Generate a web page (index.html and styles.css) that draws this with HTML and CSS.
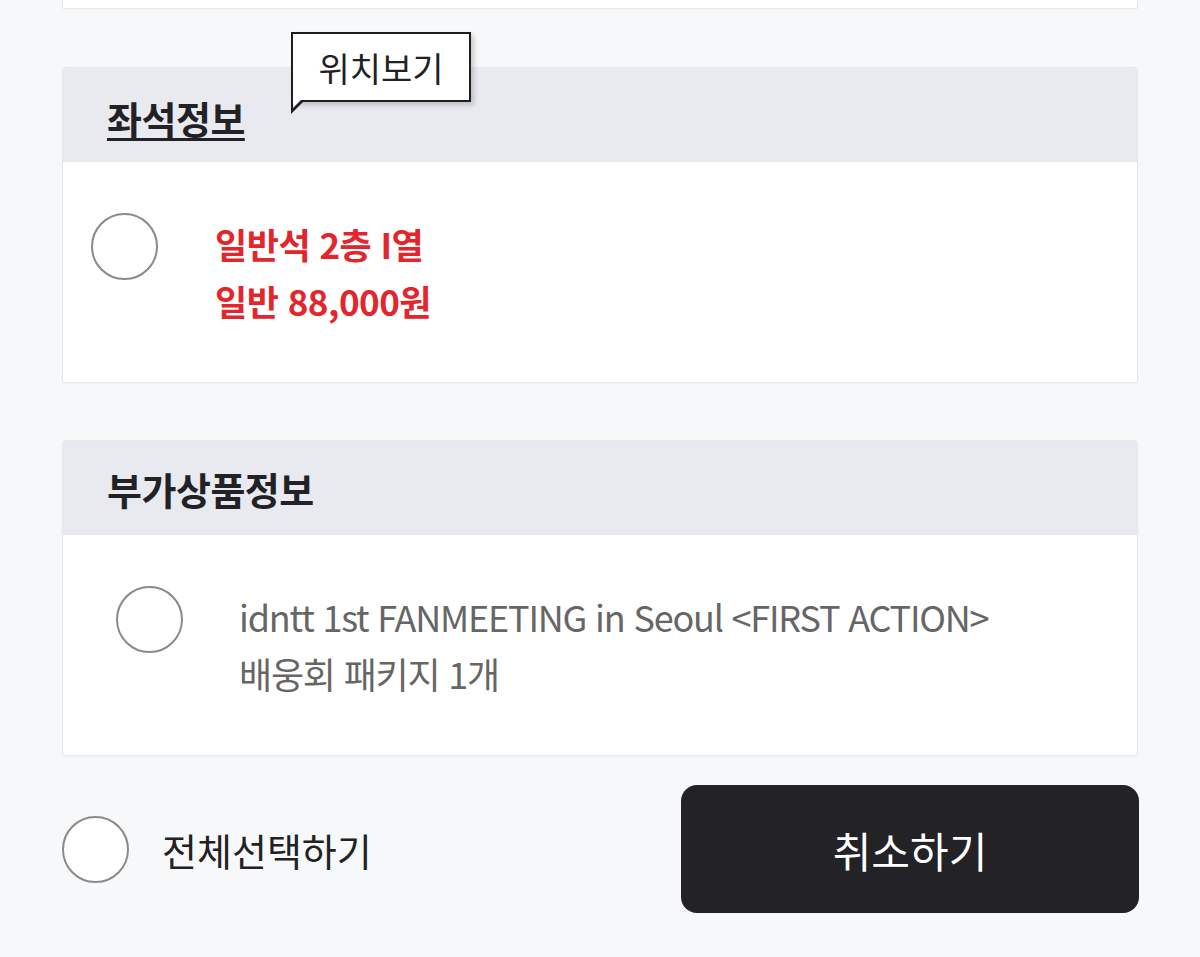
FILE: index.html
```html
<!DOCTYPE html>
<html lang="ko">
<head>
  <meta charset="UTF-8" />
  <meta name="viewport" content="width=device-width, initial-scale=1" />
  <title>좌석 취소</title>
  <link rel="stylesheet" href="styles.css">
</head>
<body>

<div class="page">
  <div class="card card-top"></div>

  <div class="card seat-card">
    <div class="card-head">
      <h3 class="title underline">좌석정보</h3>
      <div class="tooltip">위치보기</div>
    </div>
    <div class="card-body">
      <span class="radio"></span>
      <div class="info red">
        <p>일반석 2층 I열</p>
        <p>일반 88,000원</p>
      </div>
    </div>
  </div>

  <div class="card goods-card">
    <div class="card-head">
      <h3 class="title">부가상품정보</h3>
    </div>
    <div class="card-body">
      <span class="radio"></span>
      <div class="info gray">
        <p>idntt 1st FANMEETING in Seoul &lt;FIRST ACTION&gt;</p>
        <p>배웅회 패키지 1개</p>
      </div>
    </div>
  </div>

  <div class="footer">
    <label class="select-all">
      <span class="radio"></span>
      <span>전체선택하기</span>
    </label>
    <button class="cancel-btn">취소하기</button>
  </div>
</div>

</body>
</html>
```

FILE: styles.css
```css
* {
  box-sizing: border-box;
}
body {
  margin: 0;
  background: #f7f8fa;
  font-family: "Noto Sans CJK KR", "Noto Sans", sans-serif;
  color: #222;
}
p, h3 {
  margin: 0;
}
.page {
  padding: 0 62px;
}
.card {
  background: #fff;
  border: 1px solid #e6e7eb;
  border-radius: 3px;
  box-shadow: 0 1px 2px rgba(0, 0, 0, 0.03);
}
.card-top {
  height: 11px;
  margin-top: -2px;
  border-top: none;
  border-radius: 0 0 3px 3px;
}
.seat-card {
  margin-top: 58px;
}
.goods-card {
  margin-top: 57px;
}
.card-head {
  position: relative;
  height: 94px;
  background: #e9eaef;
  display: flex;
  align-items: center;
  padding-left: 44px;
  border-radius: 3px 3px 0 0;
}
.title {
  font-size: 38px;
  font-weight: 700;
  color: #222226;
  letter-spacing: -0.5px;
}
.title.underline {
  margin-top: 4px;
  text-decoration: underline;
  text-decoration-thickness: 3px;
  text-underline-offset: 4px;
}
.tooltip {
  position: absolute;
  left: 228px;
  top: -36px;
  height: 70px;
  width: 180px;
  background: #fff;
  border: 2px solid #1e1e20;
  box-shadow: 3px 3px 5px rgba(0, 0, 0, 0.18);
  font-size: 34px;
  display: flex;
  align-items: center;
  justify-content: center;
  color: #222;
}
.tooltip::before {
  content: "";
  position: absolute;
  left: -2px;
  bottom: -14px;
  border-left: 12px solid #1e1e20;
  border-bottom: 12px solid transparent;
}
.tooltip::after {
  content: "";
  position: absolute;
  left: 0;
  bottom: -8px;
  border-left: 8px solid #fff;
  border-bottom: 8px solid transparent;
}
.card-body {
  height: 220px;
  display: flex;
  align-items: flex-start;
}
.seat-card .card-body {
  padding: 51px 0 0 28px;
}
.goods-card .card-body {
  padding: 51px 0 0 53px;
}
.radio {
  flex: none;
  width: 67px;
  height: 67px;
  border: 2.5px solid #8a8a8a;
  border-radius: 50%;
  background: #fff;
}
.info p {
  line-height: 57px;
}
.seat-card .info {
  margin-left: 57px;
  margin-top: 2px;
}
.goods-card .info {
  margin-left: 56px;
  margin-top: 2px;
}
.red {
  color: #e2262c;
  font-weight: 700;
  font-size: 35px;
  letter-spacing: -0.5px;
}
.gray {
  color: #666;
  font-size: 36px;
  letter-spacing: -1.2px;
}
.footer {
  display: flex;
  justify-content: space-between;
  align-items: center;
  margin-top: 29px;
  margin-right: -1px;
}
.select-all {
  display: flex;
  align-items: center;
  gap: 33px;
  font-size: 38px;
  color: #222;
}
.cancel-btn {
  width: 458px;
  height: 128px;
  border: none;
  border-radius: 16px;
  background: #232226;
  color: #fff;
  font-family: inherit;
  font-size: 42px;
  cursor: pointer;
}
```
